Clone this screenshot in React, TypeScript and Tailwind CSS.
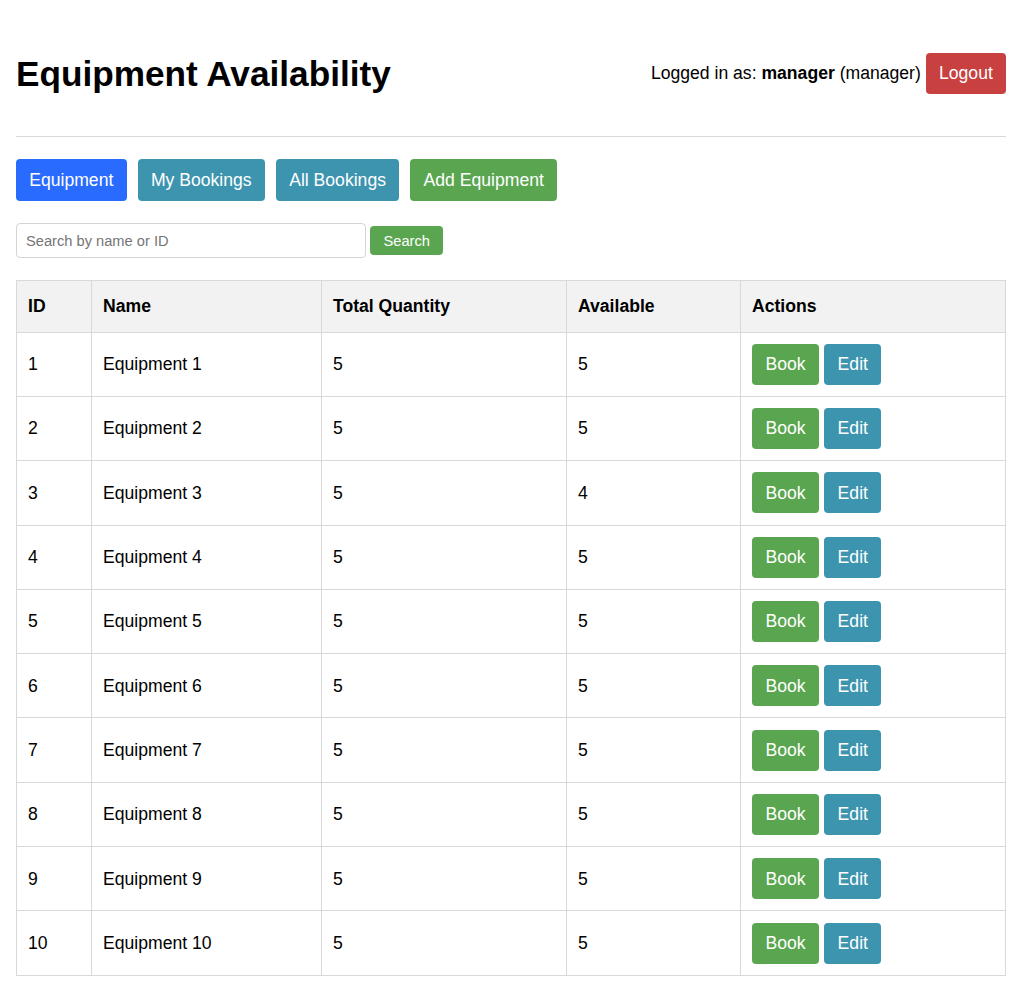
const equipment = [
  { id: 1, name: 'Equipment 1', total: 5, available: 5 },
  { id: 2, name: 'Equipment 2', total: 5, available: 5 },
  { id: 3, name: 'Equipment 3', total: 5, available: 4 },
  { id: 4, name: 'Equipment 4', total: 5, available: 5 },
  { id: 5, name: 'Equipment 5', total: 5, available: 5 },
  { id: 6, name: 'Equipment 6', total: 5, available: 5 },
  { id: 7, name: 'Equipment 7', total: 5, available: 5 },
  { id: 8, name: 'Equipment 8', total: 5, available: 5 },
  { id: 9, name: 'Equipment 9', total: 5, available: 5 },
  { id: 10, name: 'Equipment 10', total: 5, available: 5 }
]

const btn = 'rounded-[4px] px-[13.2px] text-[17.6px] text-white'
const rowBtn = 'h-[41px] rounded-[4px] px-[13.5px] text-[17.6px] text-white'

export default function App() {
  return (
    <div className="min-h-[992px] bg-white px-4 pt-[53px] font-['Liberation_Sans',Arial,sans-serif] text-[17.6px] text-black">
      {/* Header */}
      <div className="flex h-[41px] w-[990px] items-center justify-between">
        <h1 className="text-[35.2px] font-bold leading-[41px]">Equipment Availability</h1>
        <div className="flex items-center">
          <span>
            Logged in as: <strong className="font-bold">manager</strong> (manager)
          </span>
          <button className={`ml-[5px] h-[41px] bg-[#c94040] ${btn}`}>Logout</button>
        </div>
      </div>
      <div className="mt-[42px] h-px w-[990px] bg-[#d9d9d9]" />

      {/* Nav */}
      <div className="mt-[22px] flex gap-[11.2px]">
        <button className={`h-[42px] bg-[#2a6bff] ${btn}`}>Equipment</button>
        <button className={`h-[42px] bg-[#3c94af] ${btn}`}>My Bookings</button>
        <button className={`h-[42px] bg-[#3c94af] ${btn}`}>All Bookings</button>
        <button className={`h-[42px] bg-[#5aa650] ${btn}`}>Add Equipment</button>
      </div>

      {/* Search */}
      <div className="mt-[22px] flex items-center gap-1">
        <input
          type="text"
          placeholder="Search by name or ID"
          className="h-[35px] w-[350px] rounded-[4px] border border-[#d4d4d4] px-[9px] text-[14.67px] outline-none placeholder:text-[#757575]"
        />
        <button className="h-[29px] rounded-[4px] bg-[#5aa650] px-[13.5px] text-[14.67px] text-white">Search</button>
      </div>

      {/* Table */}
      <table className="mt-[22px] w-[989px] table-fixed border-collapse">
        <colgroup>
          <col className="w-[75px]" />
          <col className="w-[230px]" />
          <col className="w-[245px]" />
          <col className="w-[174px]" />
          <col className="w-[265px]" />
        </colgroup>
        <thead>
          <tr className="h-[51.7px] bg-[#f2f2f2]">
            <th className="border border-[#d9d9d9] px-[11px] text-left font-bold">ID</th>
            <th className="border border-[#d9d9d9] px-[11px] text-left font-bold">Name</th>
            <th className="border border-[#d9d9d9] px-[11px] text-left font-bold">Total Quantity</th>
            <th className="border border-[#d9d9d9] px-[11px] text-left font-bold">Available</th>
            <th className="border border-[#d9d9d9] px-[11px] text-left font-bold">Actions</th>
          </tr>
        </thead>
        <tbody>
          {equipment.map((item) => (
            <tr key={item.id} className="h-[64.3px]">
              <td className="border border-[#d9d9d9] px-[11px]">{item.id}</td>
              <td className="border border-[#d9d9d9] px-[11px]">{item.name}</td>
              <td className="border border-[#d9d9d9] px-[11px]">{item.total}</td>
              <td className="border border-[#d9d9d9] px-[11px]">{item.available}</td>
              <td className="border border-[#d9d9d9] px-[11px]">
                <div className="flex gap-[5px]">
                  <button className={`bg-[#5aa650] ${rowBtn}`}>Book</button>
                  <button className={`bg-[#3c94af] ${rowBtn}`}>Edit</button>
                </div>
              </td>
            </tr>
          ))}
        </tbody>
      </table>
    </div>
  )
}
